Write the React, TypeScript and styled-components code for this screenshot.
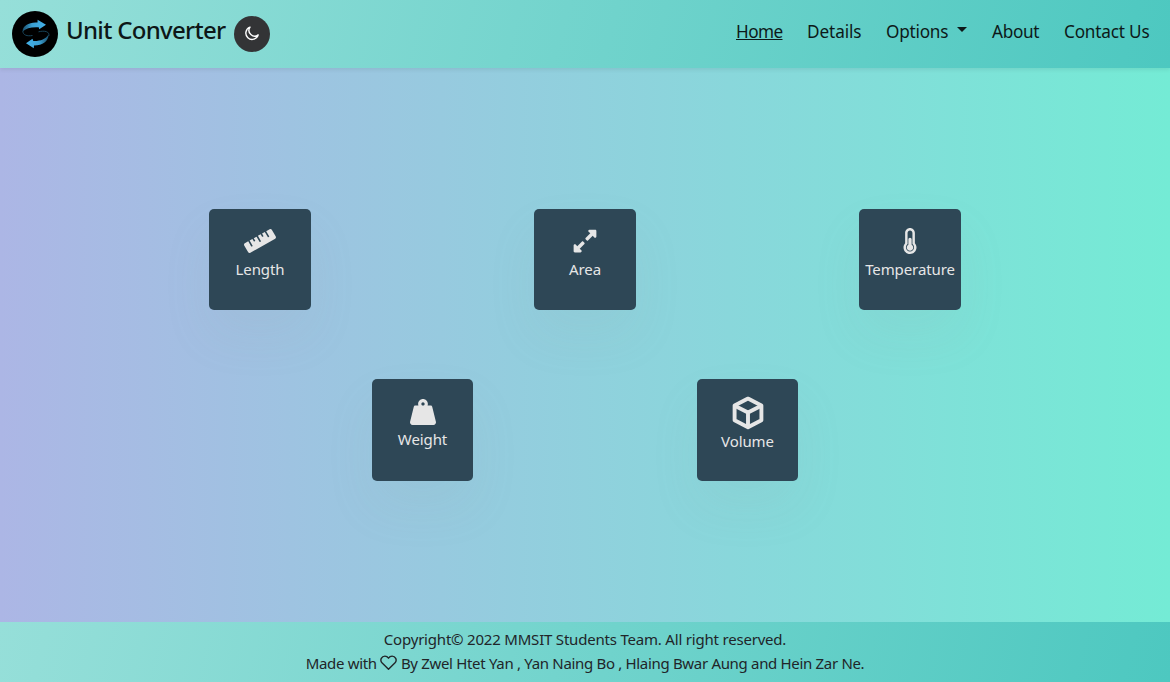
import React from 'react';
import styled, { createGlobalStyle } from 'styled-components';
import { FaRuler, FaExpandAlt, FaThermometerHalf, FaWeightHanging } from 'react-icons/fa';

const GlobalStyle = createGlobalStyle`
  * { box-sizing: border-box; }
  body {
    margin: 0;
    font-family: "Noto Sans", "Open Sans", sans-serif;
    color: #212529;
    overflow: hidden;
  }
`;

const Page = styled.div`
  height: 682px;
  display: flex;
  flex-direction: column;
  background: linear-gradient(to right, #acb6e5, #74ebd5);
`;

const Header = styled.header`
  height: 68px;
  flex: none;
  display: flex;
  align-items: flex-start;
  justify-content: space-between;
  padding: 0 20px 0 12px;
  background: linear-gradient(105deg, #96dfd9, #4dc8c0);
  box-shadow: 0 2px 4px rgba(0, 0, 0, 0.075);
`;

const Brand = styled.div`
  display: flex;
  align-items: flex-start;
`;

const Logo = styled.div`
  width: 46px;
  height: 46px;
  margin-top: 11px;
  border-radius: 50%;
  background: #000;
  overflow: hidden;

  svg { display: block; }
`;

const Title = styled.h1`
  margin: 12px 0 0 8px;
  width: 168px;
  font-size: 24px;
  line-height: 36px;
  font-weight: 500;
  letter-spacing: -0.7px;
  white-space: nowrap;
  color: #0d1717;
`;

const ThemeToggle = styled.button`
  width: 36px;
  height: 36px;
  margin-top: 16px;
  padding: 0;
  border: 0;
  border-radius: 50%;
  background: #333436;
  color: #fff;
  display: flex;
  align-items: center;
  justify-content: center;
`;

const Nav = styled.nav`
  display: flex;
  padding-top: 18px;
`;

const NavLink = styled.a<{ $width: number; $gap?: number; $spacing: number; $active?: boolean }>`
  width: ${(p) => p.$width}px;
  margin-left: ${(p) => p.$gap ?? 0}px;
  font-size: 17.2px;
  line-height: 27px;
  letter-spacing: ${(p) => p.$spacing}px;
  white-space: nowrap;
  color: #0d1919;
  text-decoration: ${(p) => (p.$active ? 'underline' : 'none')};
  text-decoration-thickness: 1px;
  text-underline-offset: 1px;
`;

const Caret = styled.span`
  display: inline-block;
  margin-left: 9px;
  vertical-align: 6px;
  border-top: 5px solid #0d1919;
  border-left: 5px solid transparent;
  border-right: 5px solid transparent;
`;

const Main = styled.main`
  flex: 1;
  display: flex;
  flex-direction: column;
  align-items: center;
  gap: 68.8px;
  padding-top: 140.8px;
`;

const CardRow = styled.div`
  display: flex;
  gap: 223.5px;
`;

const Card = styled.div`
  width: 101.5px;
  height: 101.6px;
  border-radius: 5px;
  background: #2e4756;
  color: #e6e6e6;
  display: flex;
  flex-direction: column;
  align-items: center;
  padding-top: 16px;
  box-shadow: 0 25px 50px rgba(140, 155, 160, 0.09);
`;

const IconSlot = styled.div<{ $height?: number }>`
  height: ${(p) => p.$height ?? 33}px;
  display: flex;
  align-items: center;
  justify-content: center;

  svg { display: block; }
`;

const CardLabel = styled.div`
  margin-top: -1px;
  font-size: 15px;
  line-height: 24px;
  letter-spacing: -0.1px;
  white-space: nowrap;
`;

const Footer = styled.footer`
  height: 60px;
  flex: none;
  padding-top: 5px;
  display: flex;
  flex-direction: column;
  align-items: center;
  background: linear-gradient(105deg, #96dfd9, #4dc8c0);
`;

const FooterLine = styled.p<{ $spacing: number }>`
  margin: 0;
  font-size: 15px;
  line-height: 24px;
  letter-spacing: ${(p) => p.$spacing}px;
  white-space: pre;

  svg { vertical-align: -2px; }
`;

const SwapLogo = () => (
  <svg width="46" height="46" viewBox="0 0 46 46">
    <defs>
      <linearGradient id="upper" x1="0" x2="1">
        <stop offset="0" stopColor="#1b4f6b" />
        <stop offset="0.4" stopColor="#3a9fd2" />
        <stop offset="1" stopColor="#45b2e8" />
      </linearGradient>
      <linearGradient id="lower" x1="1" x2="0">
        <stop offset="0" stopColor="#1b4f6b" />
        <stop offset="0.4" stopColor="#3a9fd2" />
        <stop offset="1" stopColor="#45b2e8" />
      </linearGradient>
    </defs>
    <path d="M10.6 20.5C10.5 14.5 17.5 10.8 25.5 11.5L25.6 8.8L34 13.8L27.2 18.2L26.7 16.2C19.5 15.8 14 17 10.6 20.5Z" fill="url(#upper)" />
    <path d="M36.6 23.5C36.5 30.5 30.5 34.5 22 34.4L21.8 37.2L14 32.3L20.5 27.7L21.3 30C28.5 30.2 33.5 28.2 36.6 23.5Z" fill="url(#lower)" />
    <path d="M10.8 20C11 24.2 15 25.4 20.5 24.5M36.8 25C38 20.5 32.5 19.3 26.5 20.8" fill="none" stroke="#1c4d64" strokeWidth="0.9" />
  </svg>
);

const MoonIcon = () => (
  <svg width="16" height="16" viewBox="0 0 16 16" fill="none" stroke="currentColor" strokeWidth="1.4" strokeLinejoin="round">
    <path d="M6 1.2A6.3 6.3 0 1 0 14.2 8.9A5.7 5.7 0 0 1 6 1.2Z" />
  </svg>
);

const HeartIcon = () => (
  <svg width="17" height="16" viewBox="0 0 17 16" fill="none" stroke="currentColor" strokeWidth="1.4" strokeLinejoin="round">
    <path d="M8.5 14.3L2.2 8.1C-0.8 4.9 1.9 1.1 4.9 1.1C6.5 1.1 7.7 2 8.5 3.2C9.3 2 10.5 1.1 12.1 1.1C15.1 1.1 17.8 4.9 14.8 8.1Z" />
  </svg>
);

const CubeIcon = () => (
  <svg width="34" height="34" viewBox="0 0 34 34" fill="none" stroke="currentColor" strokeWidth="3.9" strokeLinejoin="round">
    <path d="M17 2.6L30.4 9.4V24.3L17 31.3L3.6 24.3V9.4Z" />
    <path d="M4.2 9.9L17 16.5L29.8 9.9M17 16.5V30.8" />
  </svg>
);

export default function App() {
  return (
    <>
      <GlobalStyle />
      <Page>
        <Header>
          <Brand>
            <Logo><SwapLogo /></Logo>
            <Title>Unit Converter</Title>
            <ThemeToggle aria-label="Toggle dark mode"><MoonIcon /></ThemeToggle>
          </Brand>
          <Nav>
            <NavLink $width={46} $spacing={-0.6} $active>Home</NavLink>
            <NavLink $width={54} $gap={25} $spacing={-0.1}>Details</NavLink>
            <NavLink $width={81} $gap={25} $spacing={-0.25}>Options<Caret /></NavLink>
            <NavLink $width={47} $gap={25} $spacing={-0.3}>About</NavLink>
            <NavLink $width={86} $gap={25} $spacing={-0.2}>Contact Us</NavLink>
          </Nav>
        </Header>
        <Main>
          <CardRow>
            <Card>
              <IconSlot><FaRuler size={32} /></IconSlot>
              <CardLabel>Length</CardLabel>
            </Card>
            <Card>
              <IconSlot><FaExpandAlt size={26} /></IconSlot>
              <CardLabel>Area</CardLabel>
            </Card>
            <Card>
              <IconSlot><FaThermometerHalf size={26} /></IconSlot>
              <CardLabel>Temperature</CardLabel>
            </Card>
          </CardRow>
          <CardRow>
            <Card>
              <IconSlot><FaWeightHanging size={26} /></IconSlot>
              <CardLabel>Weight</CardLabel>
            </Card>
            <Card>
              <IconSlot $height={35}><CubeIcon /></IconSlot>
              <CardLabel>Volume</CardLabel>
            </Card>
          </CardRow>
        </Main>
        <Footer>
          <FooterLine $spacing={-0.2}>Copyright© 2022 MMSIT Students Team. All right reserved.</FooterLine>
          <FooterLine $spacing={-0.32}>Made with <HeartIcon /> By Zwel Htet Yan , Yan Naing Bo , Hlaing Bwar Aung and Hein Zar Ne.</FooterLine>
        </Footer>
      </Page>
    </>
  );
}
